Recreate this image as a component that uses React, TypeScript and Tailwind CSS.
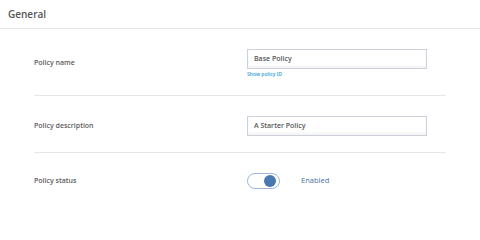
import React from "react";

export default function App() {
  return (
    <div className="w-[480px] h-[205px] bg-white overflow-hidden font-['Open_Sans',sans-serif]">
      <div className="h-[29px] border-b border-[#e6e6e6] px-[8px] flex items-center">
        <span className="text-[10px] font-semibold text-[#555]">General</span>
      </div>
      <div className="px-[34px]">
        <div className="flex items-center border-b border-[#e6e6e6] pt-[20px] pb-[17px]">
          <div className="w-[213px] text-[7px] font-semibold text-[#5c5c5c]">Policy name</div>
          <div className="flex flex-col">
            <div className="w-[180px] h-[20px] border border-[#cdd2da] shadow-[inset_0_-2px_3px_rgba(0,0,0,0.05)] px-[6px] flex items-center text-[7px] font-semibold text-[#555]">
              Base Policy
            </div>
            <div className="mt-[1px] h-[8px] leading-[8px] text-[5px] font-semibold text-[#2a9fd6]">Show policy ID</div>
          </div>
        </div>
        <div className="flex items-center border-b border-[#e6e6e6] pt-[20px] pb-[16px]">
          <div className="w-[213px] text-[7px] font-semibold text-[#5c5c5c]">Policy description</div>
          <div className="w-[180px] h-[20px] border border-[#cdd2da] shadow-[inset_0_-2px_3px_rgba(0,0,0,0.05)] px-[6px] flex items-center text-[7px] font-semibold text-[#555]">
            A Starter Policy
          </div>
        </div>
        <div className="flex items-center pt-[20px]">
          <div className="w-[213px] text-[7px] font-semibold text-[#5c5c5c]">Policy status</div>
          <div className="w-[33px] h-[16px] rounded-full border border-[#a3b6d0] bg-white flex items-center justify-end pr-[3px]">
            <div className="w-[12px] h-[12px] rounded-full bg-[#4a78b3]" />
          </div>
          <span className="ml-[21px] text-[7.5px] font-medium text-[#4a6fa5]">Enabled</span>
        </div>
      </div>
    </div>
  );
}
